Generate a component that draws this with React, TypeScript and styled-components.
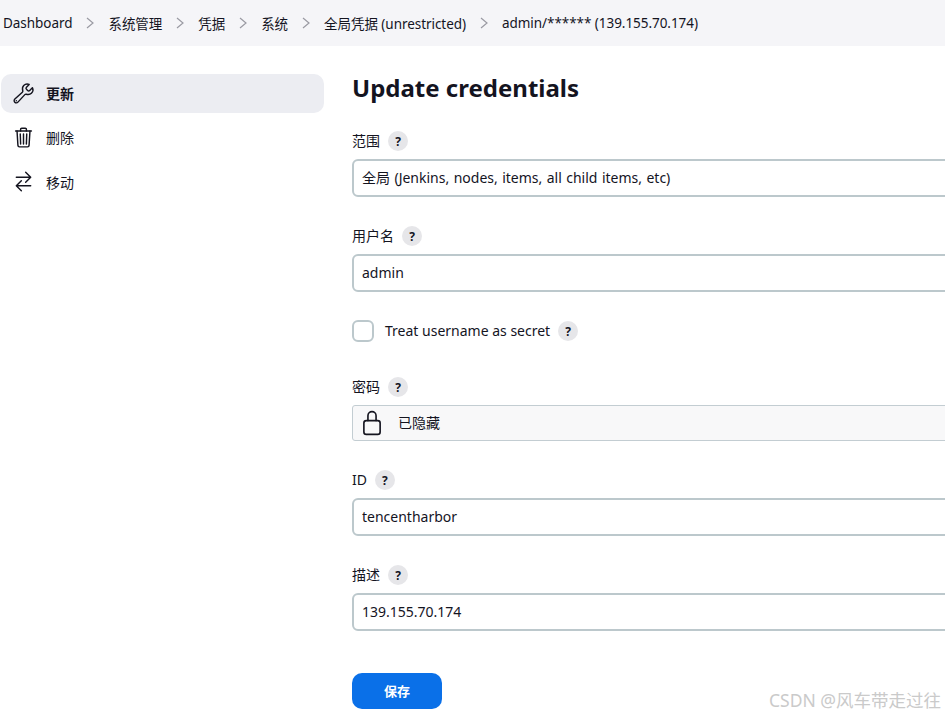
import React from "react";
import styled, { createGlobalStyle } from "styled-components";
import { IoBuildOutline, IoTrashOutline, IoSwapHorizontalOutline, IoLockClosedOutline } from "react-icons/io5";

const Global = createGlobalStyle`
  html, body { margin: 0; padding: 0; background: #fff; overflow: hidden; }
  body { font-family: "Noto Sans", "Noto Sans CJK SC", sans-serif; color: #14141f; }
  * { box-sizing: border-box; }
`;
const Page = styled.div`
  width: 945px; height: 716px; overflow: hidden; position: relative;
`;
const Crumbs = styled.nav`
  height: 46px; background: #f5f5f8; display: flex; align-items: center;
  padding-left: 3px; font-size: 13.5px; white-space: nowrap; letter-spacing: -0.05px;
`;
const Crumb = styled.span`color: #14141f;`;
const Chevron = styled.svg`
  width: 10px; height: 12px; margin: 0 13px; flex: none;
  fill: none; stroke: #9a9aa3; stroke-width: 1.2;
`;
const Body = styled.div`display: flex; padding-top: 28px;`;
const Side = styled.aside`
  width: 352px; flex: none; padding: 0 28px 0 1px; display: flex; flex-direction: column; gap: 5px;
`;
const Task = styled.div<{ $active?: boolean }>`
  height: 39px; border-radius: 10px; display: flex; align-items: center; gap: 11px; padding-left: 11px;
  font-size: 14px; font-weight: ${p => (p.$active ? 700 : 400)};
  background: ${p => (p.$active ? "#ecedf2" : "transparent")};
  svg { width: 23px; height: 23px; flex: none; color: #14141f; }
`;
const Lifted = styled.span`margin-bottom: 2px;`;
const Main = styled.main`width: 640px; flex: none;`;
const Title = styled.h1`
  margin: 0 0 29px; font-size: 24px; line-height: 28px; font-weight: 700; color: #14141f;
`;
const Field = styled.div<{ $gap: number }>`margin-bottom: ${p => p.$gap}px;`;
const Label = styled.div`
  display: flex; align-items: center; gap: 8px; height: 20px; margin-bottom: 8px; font-size: 14px;
`;
const Help = styled.span`
  width: 20px; height: 20px; border-radius: 50%; background: #e6e6e9; color: #14141f;
  display: inline-flex; align-items: center; justify-content: center; font-size: 12px; font-weight: 700;
`;
const Input = styled.div`
  width: 680px; height: 38px; border: 2px solid #bcc8cc; border-radius: 6px; background: #fff;
  display: flex; align-items: center; padding: 0 0 2px 8px; font-size: 14px; word-spacing: 0.8px; color: #14141f;
`;
const CheckRow = styled.div`
  display: flex; align-items: center; height: 22px; margin-bottom: 35px; font-size: 14px;
`;
const Box = styled.span`
  width: 22px; height: 22px; border: 2px solid #bcc8cc; border-radius: 6px; margin-right: 11px; background: #fff;
`;
const CheckText = styled(Lifted)`margin-right: 8px;`;
const Hidden = styled.div`
  width: 680px; height: 36px; border: 1px solid #c3cdd2; border-radius: 3px; background: #f8f8f9;
  display: flex; align-items: center; padding-left: 6px; gap: 13px; font-size: 14px;
  svg { width: 26px; height: 26px; flex: none; color: #14141f; }
`;
const Save = styled.button`
  width: 90px; height: 36px; border: 0; border-radius: 10px; background: #0a70e8; color: #fff; padding: 0 0 2px;
  font: 700 13px "Noto Sans", "Noto Sans CJK SC", sans-serif; display: block;
`;
const Mark = styled.div`
  position: absolute; right: 4px; top: 688px; font-size: 17.5px; line-height: 24px; color: #cacaca; white-space: nowrap;
`;

const Sep = () => (
  <Chevron viewBox="0 0 10 12"><path d="M2 1l6 5-6 5" /></Chevron>
);
const crumbs = ["Dashboard", "系统管理", "凭据", "系统", "全局凭据 (unrestricted)", "admin/****** (139.155.70.174)"];

export default function App() {
  return (
    <Page>
      <Global />
      <Crumbs>
        {crumbs.map((c, i) => (
          <React.Fragment key={c}>
            {i > 0 && <Sep />}
            <Crumb>{c}</Crumb>
          </React.Fragment>
        ))}
      </Crumbs>
      <Body>
        <Side>
          <Task $active><IoBuildOutline /><Lifted>更新</Lifted></Task>
          <Task><IoTrashOutline /><Lifted>删除</Lifted></Task>
          <Task><IoSwapHorizontalOutline />移动</Task>
        </Side>
        <Main>
          <Title>Update credentials</Title>
          <Field $gap={29}>
            <Label><Lifted>范围</Lifted><Help>?</Help></Label>
            <Input>全局 (Jenkins, nodes, items, all child items, etc)</Input>
          </Field>
          <Field $gap={28}>
            <Label><Lifted>用户名</Lifted><Help>?</Help></Label>
            <Input>admin</Input>
          </Field>
          <CheckRow>
            <Box /><CheckText>Treat username as secret</CheckText><Help>?</Help>
          </CheckRow>
          <Field $gap={29}>
            <Label><Lifted>密码</Lifted><Help>?</Help></Label>
            <Hidden><IoLockClosedOutline /><Lifted>已隐藏</Lifted></Hidden>
          </Field>
          <Field $gap={29}>
            <Label><Lifted>ID</Lifted><Help>?</Help></Label>
            <Input>tencentharbor</Input>
          </Field>
          <Field $gap={42}>
            <Label><Lifted>描述</Lifted><Help>?</Help></Label>
            <Input>139.155.70.174</Input>
          </Field>
          <Save>保存</Save>
        </Main>
      </Body>
      <Mark>CSDN @风车带走过往</Mark>
    </Page>
  );
}
